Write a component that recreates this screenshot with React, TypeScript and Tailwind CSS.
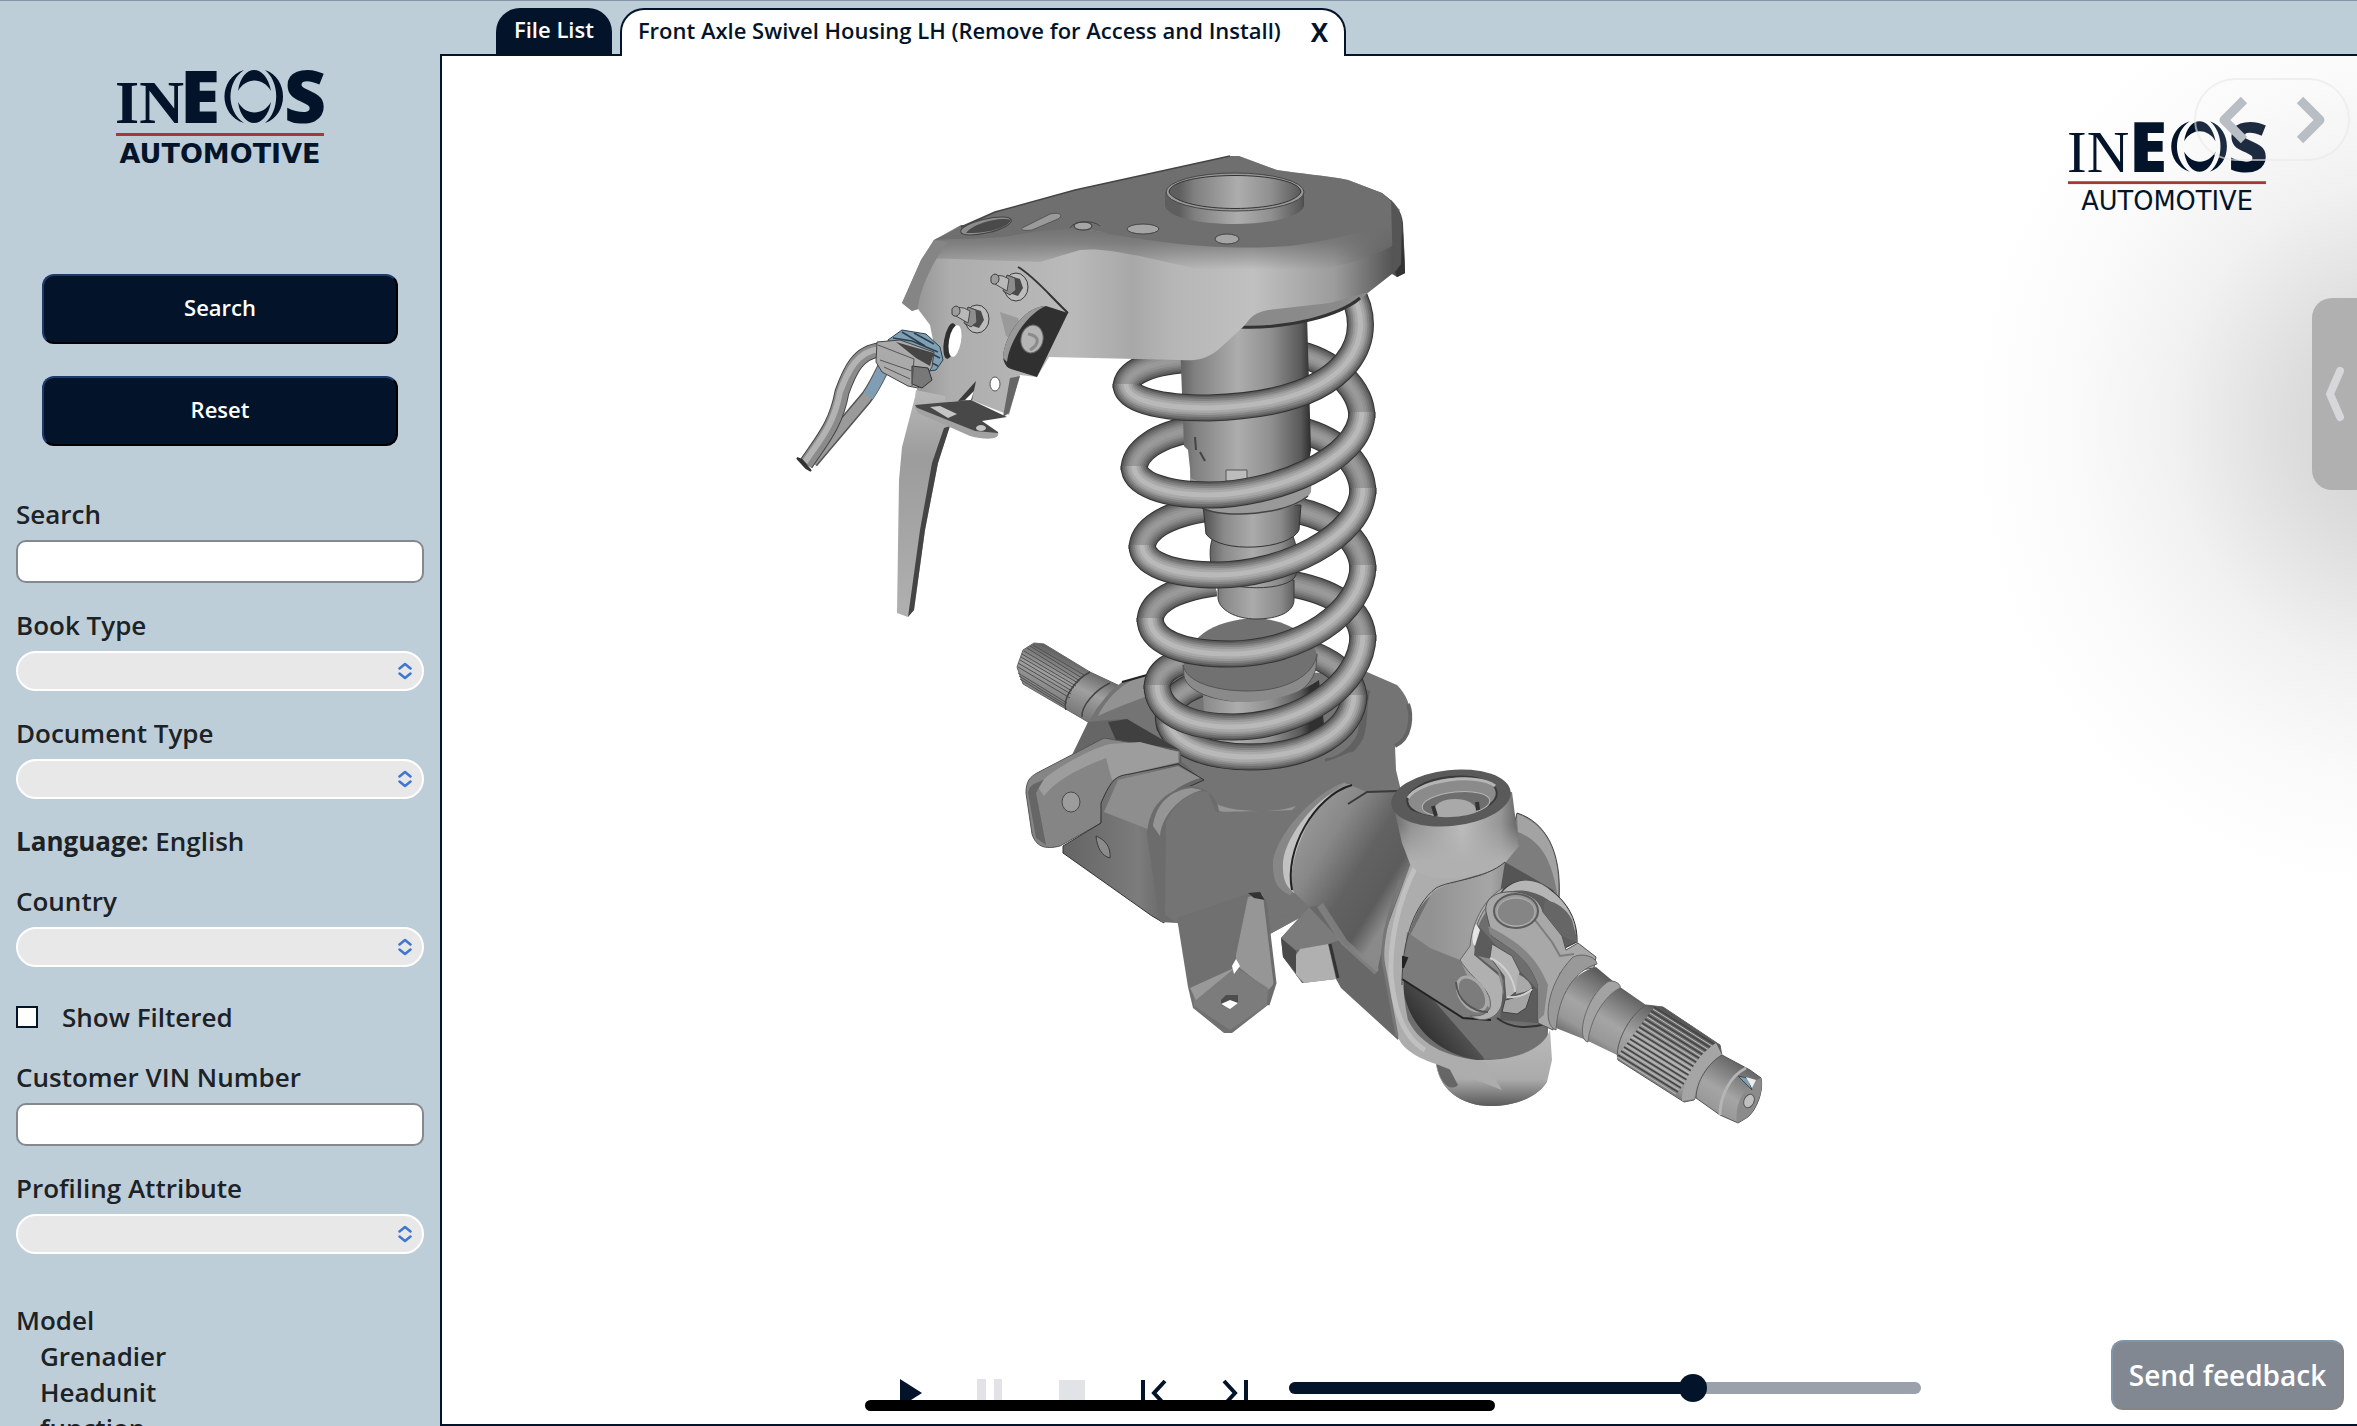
import React, { useState } from 'react';

const TOP_MENU = ['Grenadier', 'Headunit', 'function'];

const Logo: React.FC<{ className?: string }> = ({ className }) => (
  <svg viewBox="0 0 208 96" className={className} overflow="visible" role="img" aria-label="INEOS Automotive">
    <g fill="#03142a">
      <text x="-1" y="54" fontSize="62" className="font-['Liberation_Serif',serif]">IN</text>
      <text x="64" y="54" fontSize="73" fontWeight="800" className="font-['Open_Sans',sans-serif]">E</text>
      <text x="168" y="54" fontSize="73" fontWeight="800" className="font-['Open_Sans',sans-serif]">S</text>
      {/* Ring emblem: two thin side arcs and a cap at top and bottom */}
      <path d="M128 1C102 9 102 46 128 54C110 42 110 13 128 1Z" />
      <path d="M149 1C173 9 173 46 149 54C164 42 164 13 149 1Z" />
      <path d="M122 22C126-6 150-6 155 22C147 8 130 8 122 22Z" />
      <path d="M122 33C126 61 150 61 155 33C147 47 130 47 122 33Z" />
      <text x="104" y="94" fontSize="27" textAnchor="middle" className="font-['DejaVu_Sans',sans-serif]">AUTOMOTIVE</text>
    </g>
    <rect x="0" y="64" width="208" height="3" fill="#a33a36" />
  </svg>
);

const TextField: React.FC<{ id: string; label: string }> = ({ id, label }) => (
  <div className="flex flex-col gap-2">
    <label htmlFor={id}>{label}</label>
    <input id={id} type="text" className="h-[43px] w-full rounded-[10px] border-2 border-[#85898f] bg-white px-2" />
  </div>
);

const SelectField: React.FC<{ id: string; label: string }> = ({ id, label }) => (
  <div className="flex flex-col gap-2">
    <label htmlFor={id}>{label}</label>
    <div className="relative">
      <select id={id} className="block h-10 w-full appearance-none rounded-full border-2 border-white bg-[#e8e8e8] px-4">
        <option value=""></option>
      </select>
      <svg viewBox="0 0 14 18" className="pointer-events-none absolute top-[11px] right-3 h-[18px] w-[14px]" fill="none" stroke="#3f76d0" strokeWidth="2.5" strokeLinecap="round" strokeLinejoin="round">
        <path d="M1.5 6.5 7 2l5.500 4.500M1.500 11.500 7 16l5.500-4.500" />
      </svg>
    </div>
  </div>
);

const Sidebar: React.FC = () => {
  const [filtered, setFiltered] = useState(false);
  const actionClass =
    'h-[70px] rounded-xl border-2 border-t-[#1c3b6b] border-r-black border-b-black border-l-[#1c3b6b] bg-[#03142a] pb-1 text-[22px] font-semibold text-white';

  return (
    <aside className="h-full w-[440px] shrink-0 overflow-hidden px-4 pt-[68px] text-[26px] leading-9 font-semibold text-[#1c2226]">
      <Logo className="mx-auto h-24 w-[208px]" />
      <div className="mt-[109px] flex flex-col gap-8 px-[26px]">
        <button type="button" className={actionClass}>Search</button>
        <button type="button" className={actionClass}>Reset</button>
      </div>
      <form className="mt-[50px] flex flex-col gap-6">
        <TextField id="search" label="Search" />
        <SelectField id="book-type" label="Book Type" />
        <SelectField id="document-type" label="Document Type" />
        <p><b className="font-bold">Language:</b> English</p>
        <SelectField id="country" label="Country" />
        <label className="mt-2 flex items-center gap-6">
          <input
            type="checkbox"
            checked={filtered}
            onChange={(e) => setFiltered(e.target.checked)}
            className="h-[22px] w-[22px] appearance-none border-2 border-[#03142a] bg-white checked:bg-[#03142a]"
          />
          Show Filtered
        </label>
        <TextField id="vin" label="Customer VIN Number" />
        <SelectField id="profiling" label="Profiling Attribute" />
      </form>
      <div className="mt-12">
        <p>Model</p>
        <ul className="pl-6">
          {TOP_MENU.map((item) => <li key={item}>{item}</li>)}
        </ul>
      </div>
    </aside>
  );
};

// Layers of ever thinner and lighter strokes read as a round bar
const Tube: React.FC<{ d: string; back?: boolean }> = ({ d, back }) => (
  <g fill="none" strokeLinejoin="round">
    <path d={d} stroke="#333" strokeWidth="27" />
    <path d={d} stroke={back ? '#565656' : '#5a5a5a'} strokeWidth="25" />
    <path d={d} stroke={back ? '#676767' : '#6f6f6f'} strokeWidth="22" />
    <path d={d} stroke={back ? '#777' : '#848484'} strokeWidth="18" />
    <path d={d} stroke={back ? '#858585' : '#999'} strokeWidth="14" />
    <path d={d} stroke={back ? '#919191' : '#a9a9a9'} strokeWidth="10" />
    <path d={d} stroke={back ? '#999' : '#b9b9b9'} strokeWidth="5" />
  </g>
);

const BACK_COILS = [
  'M1126 388C1126 372 1150 361 1196 359',
  'M1290 352C1335 360 1362 390 1362 418',
  'M1134 470C1134 452 1155 434 1200 428',
  'M1290 428C1335 436 1363 462 1363 494',
  'M1142 549C1142 530 1165 514 1210 508',
  'M1285 508C1335 516 1363 540 1363 571',
  'M1150 622C1150 604 1168 590 1215 583',
  'M1280 582C1335 590 1363 610 1363 641',
  'M1157 689C1157 672 1168 664 1200 656',
  'M1300 650C1338 662 1354 680 1354 700',
  'M1170 727C1162 700 1185 686 1215 680',
];

const FRONT_COILS = [
  'M1350 290C1376 330 1362 404 1209 408C1160 408 1126 400 1126 384',
  'M1362 412C1362 462 1270 495 1209 495C1165 495 1134 484 1134 466',
  'M1363 488C1363 538 1280 575 1218 575C1172 575 1142 564 1142 545',
  'M1363 565C1363 612 1300 654 1230 654C1182 654 1150 642 1150 618',
  'M1354 695C1354 730 1310 757 1250 757C1205 757 1174 743 1169 722',
  'M1363 635C1363 685 1300 727 1233 727C1187 727 1157 712 1157 685',
];

const SPLINES = Array.from({ length: 13 }, (_, i) => i);

const Bolt: React.FC<{ x: number; y: number }> = ({ x, y }) => (
  <g transform={`translate(${x} ${y})`}>
    <ellipse cx="9" cy="2" rx="12" ry="14" fill="#bdbdbd" stroke="#3d3d3d" />
    <path d="M3-9 13-6 16 3 11 11 2 8Z" fill="#4a4a4a" />
    <path d="M0-10 8-7 9 5 3 10-4 6Z" fill="#8d8d8d" stroke="#444" />
    <path d="M-14-10-4-9 2-6 0 6-12-1Z" fill="#b9b9b9" stroke="#4a4a4a" />
    <path d="M-16-8C-13-13-8-11-8-6C-8-1-14 1-16-3Z" fill="#9c9c9c" stroke="#3d3d3d" />
  </g>
);

const AxleModel: React.FC = () => (
  <svg viewBox="442 56 1915 1368" preserveAspectRatio="xMidYMid slice" className="absolute inset-0 h-full w-full" role="img" aria-label="Front axle swivel housing assembly">
    <defs>
      <linearGradient id="barrel" x1="1179" x2="1310" y1="0" y2="0" gradientUnits="userSpaceOnUse">
        <stop offset="0" stopColor="#5e5e5e" />
        <stop offset=".12" stopColor="#808080" />
        <stop offset=".45" stopColor="#adadad" />
        <stop offset=".7" stopColor="#909090" />
        <stop offset=".93" stopColor="#595959" />
        <stop offset="1" stopColor="#303030" />
      </linearGradient>
      <linearGradient id="cup" x1="1205" x2="1300" y1="0" y2="0" gradientUnits="userSpaceOnUse">
        <stop offset="0" stopColor="#555" />
        <stop offset=".2" stopColor="#8a8a8a" />
        <stop offset=".5" stopColor="#ababab" />
        <stop offset=".8" stopColor="#8a8a8a" />
        <stop offset="1" stopColor="#4c4c4c" />
      </linearGradient>
      <linearGradient id="skirt" x1="900" x2="1405" y1="0" y2="0" gradientUnits="userSpaceOnUse">
        <stop offset="0" stopColor="#8c8c8c" />
        <stop offset=".1" stopColor="#adadad" />
        <stop offset=".34" stopColor="#bababa" />
        <stop offset=".46" stopColor="#a8a8a8" />
        <stop offset=".54" stopColor="#b6b6b6" />
        <stop offset=".7" stopColor="#c0c0c0" />
        <stop offset=".86" stopColor="#9c9c9c" />
        <stop offset="1" stopColor="#454545" />
      </linearGradient>
      <linearGradient id="skirtTop" x1="0" x2="0" y1="225" y2="270" gradientUnits="userSpaceOnUse">
        <stop offset="0" stopColor="#6f6f6f" />
        <stop offset=".4" stopColor="#6f6f6f" stopOpacity=".75" />
        <stop offset="1" stopColor="#6f6f6f" stopOpacity="0" />
      </linearGradient>
      <linearGradient id="shaft" x1="1662" x2="1620" y1="1003" y2="1071" gradientUnits="userSpaceOnUse">
        <stop offset="0" stopColor="#4c4c4c" />
        <stop offset=".2" stopColor="#707070" />
        <stop offset=".55" stopColor="#a5a5a5" />
        <stop offset=".8" stopColor="#989898" />
        <stop offset="1" stopColor="#666" />
      </linearGradient>
      <linearGradient id="stub" x1="1070" x2="1048" y1="655" y2="702" gradientUnits="userSpaceOnUse">
        <stop offset="0" stopColor="#5a5a5a" />
        <stop offset=".5" stopColor="#a0a0a0" />
        <stop offset="1" stopColor="#777" />
      </linearGradient>
      <linearGradient id="neck" x1="1290" x2="1400" y1="830" y2="900" gradientUnits="userSpaceOnUse">
        <stop offset="0" stopColor="#9a9a9a" />
        <stop offset=".3" stopColor="#888" />
        <stop offset=".6" stopColor="#626262" />
        <stop offset=".85" stopColor="#5c5c5c" />
        <stop offset="1" stopColor="#8a8a8a" />
      </linearGradient>
      <linearGradient id="bore" x1="1392" x2="1520" y1="0" y2="0" gradientUnits="userSpaceOnUse">
        <stop offset="0" stopColor="#6a6a6a" />
        <stop offset=".15" stopColor="#929292" />
        <stop offset=".55" stopColor="#bcbcbc" />
        <stop offset=".85" stopColor="#969696" />
        <stop offset="1" stopColor="#606060" />
      </linearGradient>
      <linearGradient id="boreFoot" x1="0" x2="0" y1="825" y2="862" gradientUnits="userSpaceOnUse">
        <stop offset="0" stopColor="#b0b0b0" stopOpacity="0" />
        <stop offset="1" stopColor="#b0b0b0" />
      </linearGradient>
      <linearGradient id="lug" x1="0" x2="0" y1="1030" y2="1106" gradientUnits="userSpaceOnUse">
        <stop offset="0" stopColor="#b9b9b9" />
        <stop offset=".65" stopColor="#ababab" />
        <stop offset="1" stopColor="#5a5a5a" />
      </linearGradient>
      <linearGradient id="yoke" x1="1430" x2="1540" y1="0" y2="0" gradientUnits="userSpaceOnUse">
        <stop offset="0" stopColor="#929292" />
        <stop offset=".55" stopColor="#a6a6a6" />
        <stop offset="1" stopColor="#5e5e5e" />
      </linearGradient>
      <linearGradient id="cavity" x1="1405" x2="1470" y1="1040" y2="990" gradientUnits="userSpaceOnUse">
        <stop offset="0" stopColor="#202020" />
        <stop offset="1" stopColor="#707070" />
      </linearGradient>
      <linearGradient id="cheek" x1="1063" x2="1170" y1="0" y2="0" gradientUnits="userSpaceOnUse">
        <stop offset="0" stopColor="#646464" />
        <stop offset=".7" stopColor="#7c7c7c" />
        <stop offset="1" stopColor="#666" />
      </linearGradient>
      <linearGradient id="blade" x1="0" x2="0" y1="390" y2="617" gradientUnits="userSpaceOnUse">
        <stop offset="0" stopColor="#b8b8b8" />
        <stop offset=".3" stopColor="#9c9c9c" />
        <stop offset="1" stopColor="#b0b0b0" />
      </linearGradient>
    </defs>

    {/* Inboard splined stub */}
    <path d="M1017 667 1023 650 1034 643 1044 644 1090 672 1120 686 1097 724 1088 722 1023 684Z" fill="url(#stub)" stroke="#666" />
    <path d="M1020 660 1072 691M1021 657 1074 688M1022 654 1076 686M1027 648 1080 681M1024 651 1078 683M1030 646 1082 678M1033 645 1084 675M1018 667 1070 698M1018 663 1071 694M1018 673 1067 703M1019 676 1066 705M1020 679 1064 706" stroke="#505050" />
    <path d="M1090 672C1074 680 1062 700 1066 710M1110 683C1095 690 1081 706 1082 717" fill="none" stroke="#444" strokeWidth="1.500" />

    {/* Spring seat and axle tube */}
    <path d="M1088 723 1097 708 1110 692 1122 682 1147 675 1367 672 1397 685C1410 698 1414 716 1408 730C1404 740 1399 742 1395 746L1396 770 1402 795 1345 900 1305 915 1270 934 1177 923 1072 800Z" fill="#747474" />
    <path d="M1098 716C1110 692 1130 678 1147 676L1160 690C1140 700 1118 706 1098 716Z" fill="#929292" />
    <path d="M1122 682 1147 675" stroke="#222" strokeWidth="2" />
    <path d="M1367 690C1362 705 1366 718 1360 737C1352 752 1336 762 1325 762" fill="none" stroke="#555" strokeWidth="7" opacity=".6" />
    <path d="M1395 746C1412 738 1412 715 1408 704" fill="none" stroke="#646464" strokeWidth="4" />

    {BACK_COILS.map((d) => <Tube key={d} d={d} back />)}

    {/* Bump stop cup under the damper */}
    <path d="M1183 668C1186 640 1210 620 1256 618C1292 620 1314 640 1317 655C1316 684 1280 691 1248 691C1215 691 1186 682 1183 668Z" fill="#717171" />
    <path d="M1183 665C1186 682 1215 691 1248 691C1285 691 1314 676 1317 654L1316 668C1310 694 1280 704 1248 703C1212 702 1186 690 1184 676Z" fill="#8a8a8a" stroke="#555" />
    <path d="M1203 695C1230 706 1280 706 1319 680L1326 742 1206 744Z" fill="url(#barrel)" />

    {/* Damper body */}
    <path d="M1218 580H1294V600C1294 612 1278 619 1256 619C1236 619 1219 610 1218 598Z" fill="url(#cup)" stroke="#3a3a3a" />
    <path d="M1214 534H1292C1300 552 1297 566 1296 575C1290 592 1225 592 1213 575C1210 560 1208 548 1214 534Z" fill="url(#cup)" stroke="#3a3a3a" />
    <path d="M1203 505H1301L1299 530C1290 550 1220 554 1206 534Z" fill="url(#cup)" stroke="#333" />
    <path d="M1190 470H1312L1311 492C1300 515 1225 520 1202 508L1190 482Z" fill="#999" />
    <path d="M1202 508C1225 519 1285 515 1308 496" fill="none" stroke="#444" strokeWidth="1.500" />
    <path d="M1179 315H1307L1311 450 1307 472C1290 486 1210 490 1191 478L1188 450 1184 446Z" fill="url(#barrel)" />
    <path d="M1226 470H1247V481H1226Z" fill="#bcbcbc" stroke="#555" />
    <path d="M1195 437 1196 450M1200 452 1205 461" stroke="#444" strokeWidth="2" />

    {FRONT_COILS.map((d) => <Tube key={d} d={d} />)}

    {/* Lower casting */}
    <path d="M1179 755C1200 772 1290 782 1350 752L1396 760 1345 785 1290 840 1274 880 1310 912 1270 934 1177 923 1160 800Z" fill="#747474" />
    <path d="M1216 804C1240 814 1280 812 1296 806L1290 812C1270 818 1240 818 1217 810Z" fill="#969696" />
    <path d="M1088 722 1108 720 1127 719 1180 750 1182 762 1200 778 1120 790 1072 755Z" fill="#666" />
    <path d="M1108 722 1127 719 1180 750 1140 743 1118 745Z" fill="#404040" />
    <path d="M1026 793C1026 781 1030 777 1037 773L1104 738 1180 751 1180 763 1130 775C1110 782 1112 790 1102 803L1101 823 1060 846C1044 850 1036 846 1032 834Z" fill="#858585" stroke="#555" />
    <path d="M1037 786C1050 770 1092 748 1110 744L1140 742 1178 752 1178 762 1128 774 1112 780 1106 758C1080 768 1056 780 1044 796Z" fill="#9d9d9d" />
    <path d="M1028 793C1030 782 1038 784 1044 779L1036 793 1046 845 1036 838Z" fill="#666" />
    <ellipse cx="1071" cy="802" rx="9" ry="10" fill="#9c9c9c" stroke="#4a4a4a" />
    <path d="M1063 846 1101 823V803C1112 778 1116 776 1130 774L1178 764 1204 780 1186 788C1168 795 1156 812 1158 833L1164 923 1152 916 1063 853Z" fill="url(#cheek)" stroke="#333" />
    <path d="M1118 780 1178 766 1200 778C1175 786 1158 800 1150 830L1104 812Z" fill="#8e8e8e" />
    <path d="M1147 835C1148 806 1166 790 1190 786C1208 788 1214 796 1218 806L1235 890 1177 923 1160 922Z" fill="#6c6c6c" />
    <path d="M1153 826C1156 804 1170 790 1192 788L1202 790C1180 796 1162 815 1160 836Z" fill="#959595" />
    <path d="M1166 822C1176 800 1196 788 1208 792L1216 812 1300 810 1296 915 1235 920 1177 923 1165 915Z" fill="#747474" />
    <path d="M1096 836C1106 840 1111 848 1110 858C1102 856 1097 848 1096 836Z" fill="#8b8b8b" stroke="#3b3b3b" />

    {/* Front tongue with mounting hole */}
    <path d="M1177 918 1250 893 1262 894 1275 983 1268 1005 1232 1033H1224L1193 1008 1188 987Z" fill="#707070" />
    <path d="M1248 897 1262 894 1265 900 1275 983 1268 990 1236 965 1236 955Z" fill="#969696" />
    <path d="M1248 893 1260 892 1265 900 1254 898Z" fill="#333" />
    <path d="M1265 900 1275 983 1268 1005" fill="none" stroke="#6c6c6c" strokeWidth="3" />
    <path d="M1193 990 1236 967 1240 970 1268 988 1267 1005 1230 1030 1194 1006Z" fill="#7c7c7c" />
    <path d="M1190 988 1236 967 1196 1000Z" fill="#999" />
    <path d="M1232 966 1236 959 1240 966 1234 974Z" fill="#fff" />
    <path d="M1221 1000 1226 995 1238 995 1238 1003 1230 1008 1221 1005Z" fill="#4d4d4d" />
    <path d="M1221 1004 1230 1000 1238 1003 1230 1009Z" fill="#fff" />

    {/* Swivel neck */}
    <path d="M1309 907 1281 938 1283 957 1302 983 1336 979 1341 988 1398 1040 1412 1000 1383 880Z" fill="#686868" />
    <path d="M1309 907 1281 938 1296 950 1328 944 1340 940Z" fill="#7b7b7b" />
    <path d="M1281 938 1296 951 1296 975 1304 983 1283 957Z" fill="#4a4a4a" />
    <path d="M1296 955 1300 949 1328 944 1336 979 1304 983 1296 975Z" fill="#b0b0b0" />
    <path d="M1330 944 1338 978" stroke="#333" strokeWidth="3" />
    <path d="M1345 782C1312 794 1278 834 1273 860C1272 882 1278 890 1290 895L1330 850Z" fill="#878787" />
    <path d="M1350 784C1318 794 1285 836 1283 862C1282 882 1288 888 1294 893L1330 850Z" fill="#c2c2c2" />
    <path d="M1345 783 1367 792 1398 791 1420 830 1412 862 1386 930 1377 972 1340 940 1320 905 1309 907 1292 890C1288 862 1306 808 1345 783Z" fill="url(#neck)" />
    <path d="M1352 785C1314 796 1284 850 1292 890" fill="none" stroke="#222" strokeWidth="2" />
    <path d="M1348 804 1367 792 1398 791" fill="none" stroke="#3a3a3a" strokeWidth="2" />
    <path d="M1320 905 1344 942 1377 972" fill="none" stroke="#888" strokeWidth="7" opacity=".7" />

    {/* Knuckle shell */}
    <path d="M1505 860 1517 813C1545 822 1562 850 1559 900L1570 930 1530 960Z" fill="#7d7d7d" stroke="#444" />
    <path d="M1517 814C1545 824 1561 850 1558 898C1552 860 1542 842 1518 832Z" fill="#a3a3a3" />
    <path d="M1412 860 1480 850 1505 862 1553 890 1550 1000 1548 1030 1546 1083C1535 1100 1510 1106 1491 1106C1460 1106 1438 1088 1436 1062L1398 1038 1383 967 1384 930Z" fill="#6e6e6e" />
    <path d="M1402 975C1402 1025 1440 1057 1484 1061L1480 1010Z" fill="url(#cavity)" />
    <path d="M1430 996C1450 1006 1470 1010 1498 1020L1546 1028 1545 1045 1516 1058 1484 1058Z" fill="#717171" />
    <path d="M1436 1060 1484 1060C1515 1060 1543 1050 1550 1030L1552 1060 1547 1082C1535 1100 1510 1106 1491 1106C1460 1106 1438 1088 1436 1062Z" fill="url(#lug)" />
    <path d="M1436 1062C1440 1085 1450 1092 1458 1085L1448 1066Z" fill="#666" />
    <path d="M1412 860 1440 845 1505 860C1475 884 1436 875 1416 915C1402 945 1400 985 1408 1020C1422 1048 1452 1058 1484 1061L1502 1090 1436 1064C1412 1056 1400 1046 1397 1034L1384 966 1384 936Z" fill="#adadad" />
    <path d="M1384 966 1397 1036M1400 880C1386 920 1380 950 1384 966" fill="none" stroke="#777" strokeWidth="3" />
    <path d="M1416 866C1396 905 1390 945 1391 975C1394 1010 1404 1038 1425 1050" fill="none" stroke="#c4c4c4" strokeWidth="5" opacity=".8" />

    {/* Pivot bore */}
    <path d="M1392 800 1402 843 1410 862C1424 884 1480 880 1505 862L1519 846 1512 792Z" fill="url(#bore)" />
    <path d="M1398 825 1402 843 1410 864C1424 886 1480 881 1505 863L1519 846 1516 825Z" fill="url(#boreFoot)" />
    <ellipse cx="1451" cy="798" rx="60" ry="28" transform="rotate(-6 1451 798)" fill="#5a5a5a" />
    <ellipse cx="1452" cy="797" rx="45" ry="20" transform="rotate(-6 1452 797)" fill="#8b8b8b" stroke="#3a3a3a" strokeWidth="2" />
    <path d="M1408 798C1418 780 1478 772 1495 786" fill="none" stroke="#b5b5b5" strokeWidth="3" />
    <ellipse cx="1456" cy="804" rx="34" ry="12" transform="rotate(-6 1456 804)" fill="#6e6e6e" stroke="#b5b5b5" />
    <ellipse cx="1455" cy="810" rx="21" ry="11" fill="#a9a9a9" />
    <path d="M1433 806 1436 816M1477 802 1478 810" stroke="#333" strokeWidth="4" />
    <path d="M1407 808C1436 824 1485 818 1497 798L1502 806C1486 827 1430 830 1402 814Z" fill="#5a5a5a" />

    {/* Outer yoke */}
    <path d="M1432 893C1446 880 1484 880 1505 862L1553 890 1562 906 1530 900 1500 896C1480 915 1472 935 1474 953L1498 966C1506 985 1504 1010 1491 1018L1463 1018 1402 978 1405 945Z" fill="url(#yoke)" />
    <path d="M1407 932 1430 948 1460 960 1474 990 1496 1016 1463 1018 1402 979Z" fill="#7b7b7b" />
    <path d="M1402 979 1463 1018 1491 1020" fill="none" stroke="#222" strokeWidth="2" />
    <path d="M1505 862C1484 880 1450 880 1436 888C1414 905 1402 940 1402 985" fill="none" stroke="#444" />
    <path d="M1505 862 1553 890 1562 905 1525 880 1500 893Z" fill="#555" />
    <path d="M1403 957V968L1407 958Z" fill="#222" stroke="#222" strokeWidth="2" />
    <path d="M1503 888C1482 900 1472 925 1470 946L1460 960C1472 980 1494 990 1490 1008C1486 1016 1478 1016 1470 1016C1484 1024 1498 1018 1502 1004C1506 985 1500 972 1490 966L1476 953C1470 930 1482 905 1503 892Z" fill="#b0b0b0" stroke="#666" />
    <ellipse cx="1472" cy="994" rx="12" ry="19" transform="rotate(-35 1472 994)" fill="#7c7c7c" stroke="#a8a8a8" strokeWidth="3" />
    <path d="M1456 982C1457 1000 1472 1012 1488 1012" fill="none" stroke="#555" strokeWidth="2" />

    {/* Cross and inner yoke */}
    <path d="M1478 925 1500 950 1538 990 1538 1023 1500 1020 1504 980 1474 955Z" fill="#5c5c5c" />
    <path d="M1476 924C1471 934 1472 944 1475 946L1480 930Z" fill="#e5e5e5" />
    <path d="M1478 956 1496 960 1502 978 1504 996 1498 972Z" fill="#8a8a8a" />
    <path d="M1492 944 1512 956 1520 972 1518 990 1506 1000 1504 976 1490 957Z" fill="#b4b4b4" stroke="#555" />
    <path d="M1518 974C1526 978 1532 984 1532 990L1516 994Z" fill="#a9a9a9" />
    <path d="M1505 1000C1516 998 1528 992 1533 987L1526 1008 1517 1014 1502 1012Z" fill="#a4a4a4" stroke="#444" />
    <path d="M1490 958C1504 964 1514 978 1515 992M1507 997C1516 998 1526 995 1532 989" fill="none" stroke="#d0d0d0" strokeWidth="2" />
    <path d="M1497 1018C1512 1030 1532 1028 1545 1024" fill="none" stroke="#333" strokeWidth="2" />
    <path d="M1498 897C1505 884 1522 876 1540 884C1566 896 1578 920 1577 942L1565 948 1535 905Z" fill="#5f5f5f" stroke="#333" />
    <path d="M1502 893C1515 876 1536 878 1550 890C1570 905 1578 925 1575 940C1564 910 1550 898 1534 893C1520 888 1510 892 1502 893Z" fill="#b5b5b5" />
    <path d="M1486 912C1484 900 1494 893 1506 892C1528 890 1540 900 1543 912L1562 936 1566 950 1578 943 1596 957 1594 968 1560 973 1553 1030 1538 1023V985C1528 955 1508 948 1492 936Z" fill="#a8a8a8" stroke="#555" />
    <path d="M1488 926C1510 938 1534 950 1548 985L1544 1015 1538 1020V985C1528 955 1508 948 1490 934Z" fill="#858585" />
    <path d="M1535 920 1552 942 1560 956 1574 954" fill="none" stroke="#7d7d7d" strokeWidth="2" />
    <path d="M1543 912 1562 936 1578 943 1572 920C1566 908 1556 902 1545 900Z" fill="#666" />
    <ellipse cx="1516" cy="911" rx="22" ry="17" fill="#9a9a9a" stroke="#5c5c5c" strokeWidth="2" />
    <ellipse cx="1516" cy="912" rx="19" ry="14" fill="#858585" stroke="#b5b5b5" />

    {/* Outboard shaft */}
    <path d="M1596 967 1620 987 1646 1005 1617 1055 1586 1040 1556 1028C1548 1010 1566 975 1596 967Z" fill="url(#shaft)" />
    <path d="M1572 958C1580 952 1596 956 1597 964C1575 970 1558 995 1556 1030C1542 1026 1546 985 1572 958Z" fill="#999" stroke="#666" />
    <path d="M1606 983C1612 978 1622 984 1620 988C1604 996 1590 1020 1588 1042C1576 1040 1584 1000 1606 983Z" fill="#a3a3a3" stroke="#6a6a6a" />
    <path d="M1646 1005 1663 1007 1720 1045 1722 1056 1694 1100 1684 1102 1618 1060C1614 1046 1628 1016 1646 1005Z" fill="url(#shaft)" stroke="#5a5a5a" />
    {SPLINES.map((i) => (
      <g key={i} transform={`translate(${-i * 3} ${i * 4})`}>
        <path d="M1654 1007 1714 1044" stroke="#454545" strokeWidth="1.500" />
        <path d="M1653 1009 1712 1046" stroke="#bdbdbd" />
      </g>
    ))}
    <path d="M1716 1043C1698 1054 1682 1080 1682 1101L1694 1099C1696 1082 1706 1064 1722 1055Z" fill="#a5a5a5" />
    <path d="M1722 1055 1750 1070 1761 1078C1764 1092 1756 1110 1748 1117L1738 1123 1720 1115 1696 1098C1696 1082 1708 1063 1722 1055Z" fill="url(#shaft)" stroke="#555" />
    <path d="M1746 1068C1730 1076 1720 1096 1720 1115" fill="none" stroke="#b5b5b5" strokeWidth="3" />
    <path d="M1761 1078C1745 1084 1734 1104 1737 1123L1748 1117C1758 1104 1764 1090 1761 1078Z" fill="#8b8b8b" />
    <path d="M1738 1076 1752 1090 1748 1078Z" fill="#7f9cb0" stroke="#3d4d58" />
    <path d="M1746 1077 1756 1080 1752 1088Z" fill="#ededed" />
    <ellipse cx="1749" cy="1101" rx="5" ry="7" transform="rotate(25 1749 1101)" fill="#c0c0c0" stroke="#555" />

    {/* Top mount */}
    <path d="M1218 345 1240 300 1380 270 1369 292 1355 304C1330 320 1270 330 1235 328Z" fill="#8a8a8a" />
    <path d="M1240 327C1290 329 1340 315 1360 298" fill="none" stroke="#333" strokeWidth="3" />
    <path d="M902 303 921 260 934 240 961 227 995 212 1075 190 1230 156H1239L1277 170C1300 174 1325 175 1348 180L1382 193C1396 203 1402 212 1403 223L1405 273 1397 277 1392 274 1369 292 1330 303 1268 310C1250 314 1250 320 1243 327L1218 350C1205 360 1195 361 1180 360L1049 357 1037 377 1020 375 1009 415 971 400 915 405 917 390 934 345 930 325 918 309 912 311Z" fill="url(#skirt)" />
    <path d="M934 240 961 225 1060 226 1160 240 1290 246 1400 215 1402 240C1370 262 1310 278 1230 276C1160 262 1110 246 1080 250L1040 262 925 258Z" fill="url(#skirtTop)" />
    <path d="M934 240 961 227 995 212 1075 190 1230 156H1239L1277 170C1300 174 1325 175 1348 180L1382 193 1400 210C1385 228 1345 238 1290 246C1230 250 1180 246 1110 234C1080 226 1050 228 1010 236C980 240 955 238 934 240Z" fill="#6f6f6f" />
    <path d="M961 227 995 212 1075 190 1230 156" fill="none" stroke="#444" strokeWidth="1.500" />
    <path d="M1391 200C1402 210 1404 225 1405 273L1397 277 1393 270Z" fill="#555" />
    <path d="M1402 222 1405 273 1397 277 1395 272 1401 264Z" fill="#333" />
    <path d="M902 303 921 260 934 240 948 242C926 270 918 300 918 309L912 311Z" fill="#858585" />

    <path d="M1165 192V206C1172 230 1296 230 1304 206V192Z" fill="url(#barrel)" />
    <ellipse cx="1235" cy="192" rx="69" ry="19" fill="#989898" stroke="#444" />
    <path d="M1169 192C1171 170 1299 170 1301 192C1290 214 1180 214 1169 192Z" fill="url(#barrel)" stroke="#333" />

    <ellipse cx="986" cy="226" rx="26" ry="7" transform="rotate(-13 986 226)" fill="#8c8c8c" stroke="#444" />
    <path d="M966 233C972 224 1000 216 1011 220C1008 228 985 234 966 233Z" fill="#4a4a4a" />
    <path d="M1022 228 1050 214C1060 212 1064 215 1058 219L1032 230C1024 231 1020 230 1022 228Z" fill="#9a9a9a" stroke="#555" />
    <ellipse cx="1083" cy="226" rx="9" ry="4" fill="#a5a5a5" stroke="#333" />
    <path d="M1070 228C1074 220 1094 220 1100 226" fill="none" stroke="#444" />
    <ellipse cx="1143" cy="229" rx="16" ry="5" fill="#a5a5a5" stroke="#444" />
    <ellipse cx="1227" cy="239" rx="12" ry="5" fill="#a5a5a5" stroke="#444" />

    {/* Sensor bracket */}
    <path d="M1018 267C1034 276 1050 296 1068 313" fill="none" stroke="#333" strokeWidth="2" />
    <path d="M1000 312 1018 318 1024 345 1006 336Z" fill="#9a9a9a" />
    <path d="M1068 313 1046 306C1026 306 1004 334 1003 358C1005 366 1008 368 1011 369L1037 377Z" fill="#303030" />
    <path d="M1046 306C1026 306 1004 334 1003 358L1007 362C1010 338 1030 312 1046 306Z" fill="#999" />
    <ellipse cx="1032" cy="339" rx="11" ry="14" transform="rotate(12 1032 339)" fill="#b5b5b5" stroke="#666" />
    <path d="M1028 334C1040 336 1040 344 1030 350" fill="none" stroke="#8b8b8b" strokeWidth="3" />
    <Bolt x={1007} y={285} />
    <Bolt x={968} y={317} />
    <ellipse cx="950" cy="341" rx="6" ry="18" transform="rotate(10 950 341)" fill="#303030" />
    <ellipse cx="955" cy="341" rx="6" ry="16" transform="rotate(10 955 341)" fill="#fff" />
    <ellipse cx="995" cy="384" rx="5" ry="7" fill="#fff" stroke="#555" />
    <path d="M958 401 976 381 972 400Z" fill="#3b3b3b" />
    <path d="M965 400 974 391 971 400Z" fill="#fff" />
    <path d="M1020 376 1009 413 1003 417 1010 378Z" fill="#666" />

    <path d="M916 390 915 397 902 447 899 480 897 613 908 617 914 610 925 530 938 463 950 425 945 396Z" fill="url(#blade)" />
    <path d="M944 428 950 426 938 463 925 530 914 610 908 617 920 530 932 463Z" fill="#444" />
    <path d="M915 405 971 400 1007 417 982 421 998 432C1000 438 988 437 974 434L919 412Z" fill="#484848" />
    <path d="M915 407 975 431 998 433C1000 440 985 440 970 436L918 413Z" fill="#a2a2a2" />
    <path d="M930 407 940 406 957 414 948 418Z" fill="#c5c5c5" />
    <ellipse cx="981" cy="428" rx="5" ry="3" fill="#c5c5c5" />

    {/* Harness and connectors */}
    <g fill="none">
      <path d="M888 358C880 375 874 388 866 398L812 462" stroke="#555" strokeWidth="13" />
      <path d="M888 358C880 375 874 388 866 398L812 462" stroke="#9a9a9a" strokeWidth="10" />
      <path d="M888 358C880 375 874 388 868 396" stroke="#7f9eb3" strokeWidth="11" />
      <path d="M880 350C858 352 850 370 842 392C836 425 822 440 806 464" stroke="#444" strokeWidth="15" />
      <path d="M880 350C858 352 850 370 842 392C836 425 822 440 806 464" stroke="#8b8b8b" strokeWidth="13" />
      <path d="M880 349C858 351 848 370 840 392C834 425 820 440 805 462" stroke="#b3b3b3" strokeWidth="6" />
    </g>
    <path d="M797 458 802 460 811 471 806 468Z" fill="#333" stroke="#333" strokeWidth="2" />
    <path d="M888 340 902 330 926 334 940 347 943 360 936 370 920 372 890 352Z" fill="#7f9fb5" stroke="#2c3f4c" />
    <path d="M893 338 912 341 938 352M902 332 925 346M914 333 934 344M928 352 940 358M930 362 938 366" stroke="#2c3f4c" strokeWidth="1.500" fill="none" />
    <path d="M877 342 900 340 934 352 932 367 918 388 908 386 882 372 876 362Z" fill="#aaa" stroke="#444" />
    <path d="M896 342 934 353 930 366 916 358Z" fill="#454545" />
    <path d="M912 366 928 368 932 380 922 388 912 384Z" fill="#787878" stroke="#333" />
    <path d="M880 360 912 371M884 367 910 379M878 345 914 359 912 386" stroke="#555" fill="none" />
  </svg>
);

const Header: React.FC = () => (
  <nav className="relative z-10 -mb-[2px] flex items-end gap-2 pt-[7px] pl-14 text-[22px] font-semibold text-[#03142a]">
    <button type="button" className="h-12 rounded-t-3xl bg-[#03142a] px-[18px] pb-[6px] text-white">File List</button>
    <div className="flex h-12 items-center gap-[30px] rounded-t-3xl border-2 border-b-0 border-[#03142a] bg-white px-4 pb-[6px]">
      <a href="#document">Front Axle Swivel Housing LH (Remove for Access and Install)</a>
      <button type="button" aria-label="X, close tab" className="pt-1 text-[26px] leading-8 font-bold">X</button>
    </div>
  </nav>
);

const Player: React.FC = () => {
  const [position, setPosition] = useState(646);
  const filled = 14 + (position / 1000) * 604;

  return (
    <div className="relative flex items-start justify-center gap-[38px] pb-[17px] pl-[14px]">
      <div className="flex gap-[52px] pt-[5px] text-[#03142a]">
        <button type="button" aria-label="Play" className="h-7 w-[30px]">
          <svg viewBox="0 0 30 28" fill="currentColor"><path d="M7 0 29 14 7 28Z" /></svg>
        </button>
        <button type="button" aria-label="Pause" disabled className="h-7 w-[30px] text-[#e2e3e7]">
          <svg viewBox="0 0 30 28" fill="currentColor"><path d="M2 0H11V28H2ZM19 0H27V28H19Z" /></svg>
        </button>
        <button type="button" aria-label="Stop" disabled className="h-7 w-[30px] text-[#e2e3e7]">
          <svg viewBox="0 0 30 28" fill="currentColor"><path d="M2 1H28V27H2Z" /></svg>
        </button>
        <button type="button" aria-label="Previous step" className="h-7 w-[30px]">
          <svg viewBox="0 0 30 28" fill="none" stroke="currentColor" strokeWidth="4"><path d="M4 1V27M26 2 15 14 26 26" /></svg>
        </button>
        <button type="button" aria-label="Next step" className="h-7 w-[30px]">
          <svg viewBox="0 0 30 28" fill="none" stroke="currentColor" strokeWidth="4"><path d="M25 1V27M3 2 14 14 3 26" /></svg>
        </button>
      </div>
      <div className="relative flex h-7 w-[632px] items-center">
        <div className="h-3 w-full overflow-hidden rounded-full bg-[#9aa1aa]">
          <div className="h-full bg-[#03142a]" style={{ width: filled }} />
        </div>
        <input
          type="range"
          aria-label="Animation position"
          min={0}
          max={1000}
          value={position}
          onChange={(e) => setPosition(Number(e.target.value))}
          className="absolute inset-0 m-0 h-7 w-full appearance-none bg-transparent [&::-webkit-slider-thumb]:h-7 [&::-webkit-slider-thumb]:w-7 [&::-webkit-slider-thumb]:appearance-none [&::-webkit-slider-thumb]:rounded-full [&::-webkit-slider-thumb]:bg-[#03142a]"
        />
      </div>
    </div>
  );
};

const Viewer: React.FC = () => (
  <main className="relative flex flex-1 flex-col justify-between overflow-hidden border-2 border-r-0 border-[#03142a] bg-white bg-[radial-gradient(ellipse_430px_470px_at_calc(100%_+_40px)_370px,#cfcfcf_0%,#dddddd_25%,#f1f1f1_52%,#fafafa_75%,#ffffff_100%)]">
    <AxleModel />
    <Logo className="relative mt-[64px] mr-[91px] h-[92px] w-[198px] self-end" />
    <Player />

    {/* Floating controls over the canvas */}
    <div className="absolute top-[22px] right-[7px] flex h-[83px] w-[156px] items-center justify-between rounded-full border-2 border-[#e8e8ea]/60 bg-white/10 px-[21px]">
      <button type="button" aria-label="Back" className="h-12 w-8 text-[#b9bec5]">
        <svg viewBox="0 0 32 48" fill="none" stroke="currentColor" strokeWidth="9" strokeLinejoin="round"><path d="M27 4 7 24 27 44" /></svg>
      </button>
      <button type="button" aria-label="Forward" className="h-12 w-8 text-[#b9bec5]">
        <svg viewBox="0 0 32 48" fill="none" stroke="currentColor" strokeWidth="9" strokeLinejoin="round"><path d="M5 4 25 24 5 44" /></svg>
      </button>
    </div>
    <button type="button" aria-label="Open side panel" className="absolute top-[242px] right-0 flex h-48 w-[45px] items-center justify-center rounded-l-[20px] bg-[#b0b0b0]">
      <svg viewBox="0 0 20 56" className="h-14 w-5" fill="none" stroke="#d6d6db" strokeWidth="8" strokeLinecap="round" strokeLinejoin="round"><path d="M15 5 5 28 15 51" /></svg>
    </button>
    <button type="button" className="absolute right-[13px] bottom-[14px] h-[70px] w-[233px] rounded-xl border-2 border-t-[#7f95a8] border-r-[#858585] border-b-[#858585] border-l-[#7f95a8] bg-[#828892] text-[28px] font-semibold text-white">
      Send feedback
    </button>
    <div className="absolute bottom-[13px] left-[423px] h-[11px] w-[630px] rounded-full bg-black" />
  </main>
);

const App: React.FC = () => (
  <div className="flex h-screen overflow-hidden border-t border-[#8496a5] bg-[#bdced9] font-['Open_Sans',sans-serif]">
    <Sidebar />
    <div className="flex min-w-0 flex-1 flex-col">
      <Header />
      <Viewer />
    </div>
  </div>
);

export default App;
